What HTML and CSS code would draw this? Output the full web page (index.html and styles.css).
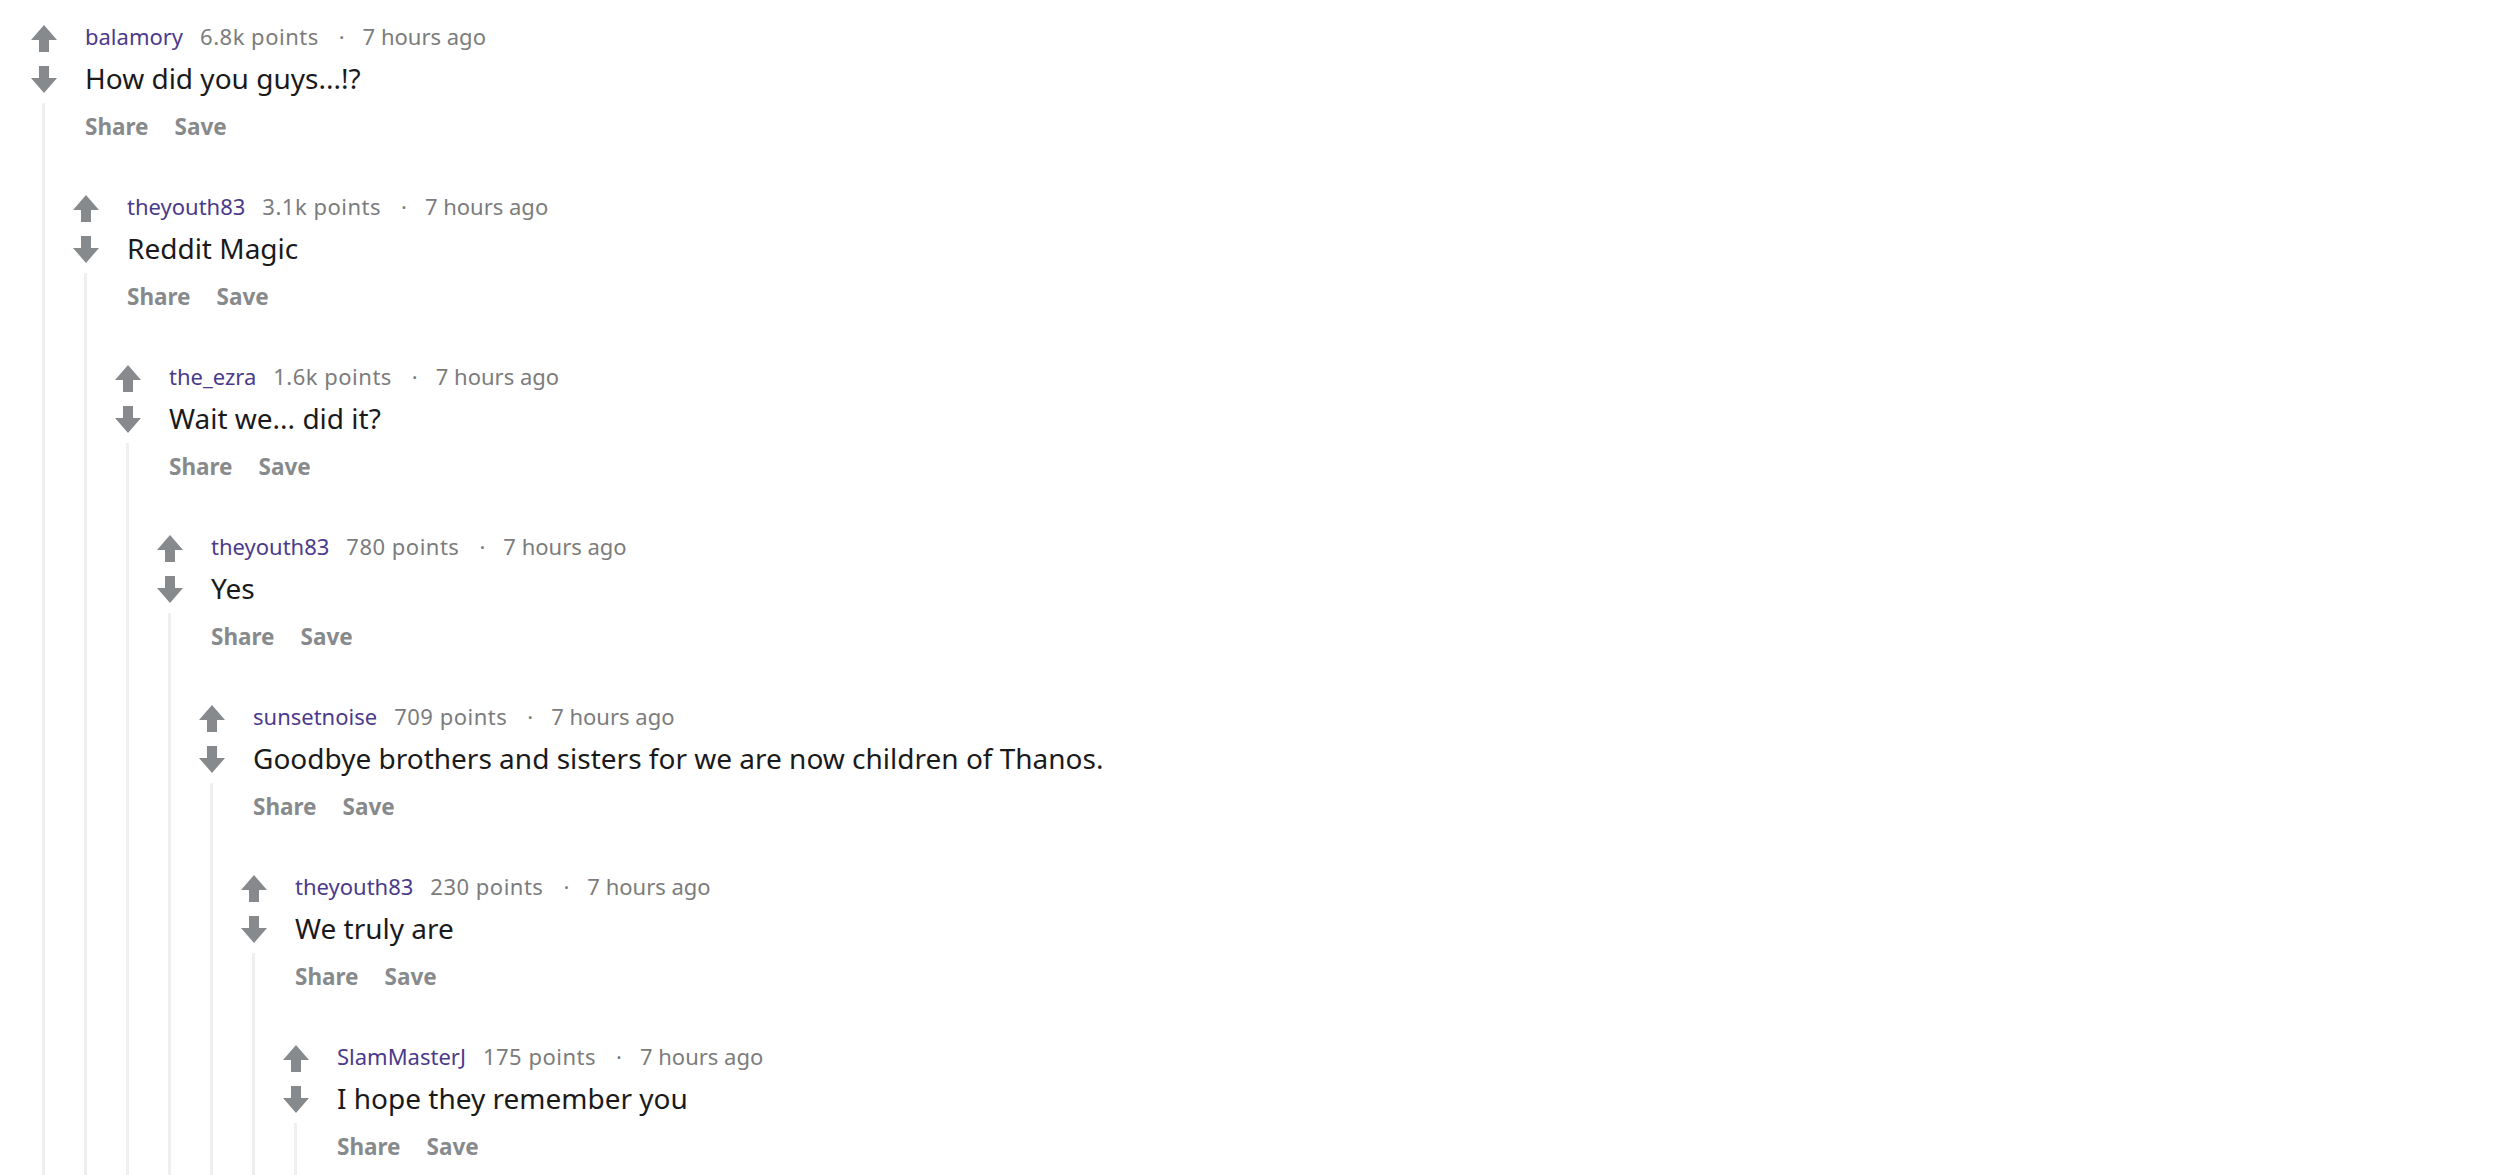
FILE: index.html
```html
<!DOCTYPE html>
<html lang="en">
<head>
<meta charset="utf-8">
<title>Comments</title>
<link rel="stylesheet" href="styles.css">
</head>
<body>
<svg class="defs" width="0" height="0" aria-hidden="true">
  <symbol id="up" viewBox="0 0 26 27"><path d="M13 0 L26 15 L18 15 L18 27 L8 27 L8 15 L0 15 Z"/></symbol>
  <symbol id="down" viewBox="0 0 26 27"><path d="M8 0 L18 0 L18 12 L26 12 L13 27 L0 12 L8 12 Z"/></symbol>
</svg>
<main class="thread-list">
  <div class="comment">
    <div class="votes"><svg class="arrow"><use href="#up"/></svg><svg class="arrow"><use href="#down"/></svg></div>
    <div class="meta"><span class="author">balamory</span><span class="points">6.8k points</span><span class="dot">·</span><span class="time">7 hours ago</span></div>
    <div class="body">How did you guys...!?</div>
    <div class="actions"><span>Share</span><span>Save</span></div>
    <div class="rail"></div>
    <div class="children">
      <div class="comment">
        <div class="votes"><svg class="arrow"><use href="#up"/></svg><svg class="arrow"><use href="#down"/></svg></div>
        <div class="meta"><span class="author">theyouth83</span><span class="points">3.1k points</span><span class="dot">·</span><span class="time">7 hours ago</span></div>
        <div class="body">Reddit Magic</div>
        <div class="actions"><span>Share</span><span>Save</span></div>
        <div class="rail"></div>
        <div class="children">
          <div class="comment">
            <div class="votes"><svg class="arrow"><use href="#up"/></svg><svg class="arrow"><use href="#down"/></svg></div>
            <div class="meta"><span class="author">the_ezra</span><span class="points">1.6k points</span><span class="dot">·</span><span class="time">7 hours ago</span></div>
            <div class="body">Wait we... did it?</div>
            <div class="actions"><span>Share</span><span>Save</span></div>
            <div class="rail"></div>
            <div class="children">
              <div class="comment">
                <div class="votes"><svg class="arrow"><use href="#up"/></svg><svg class="arrow"><use href="#down"/></svg></div>
                <div class="meta"><span class="author">theyouth83</span><span class="points">780 points</span><span class="dot">·</span><span class="time">7 hours ago</span></div>
                <div class="body">Yes</div>
                <div class="actions"><span>Share</span><span>Save</span></div>
                <div class="rail"></div>
                <div class="children">
                  <div class="comment">
                    <div class="votes"><svg class="arrow"><use href="#up"/></svg><svg class="arrow"><use href="#down"/></svg></div>
                    <div class="meta"><span class="author">sunsetnoise</span><span class="points">709 points</span><span class="dot">·</span><span class="time">7 hours ago</span></div>
                    <div class="body">Goodbye brothers and sisters for we are now children of Thanos.</div>
                    <div class="actions"><span>Share</span><span>Save</span></div>
                    <div class="rail"></div>
                    <div class="children">
                      <div class="comment">
                        <div class="votes"><svg class="arrow"><use href="#up"/></svg><svg class="arrow"><use href="#down"/></svg></div>
                        <div class="meta"><span class="author">theyouth83</span><span class="points">230 points</span><span class="dot">·</span><span class="time">7 hours ago</span></div>
                        <div class="body">We truly are</div>
                        <div class="actions"><span>Share</span><span>Save</span></div>
                        <div class="rail"></div>
                        <div class="children">
                          <div class="comment">
                            <div class="votes"><svg class="arrow"><use href="#up"/></svg><svg class="arrow"><use href="#down"/></svg></div>
                            <div class="meta"><span class="author">SlamMasterJ</span><span class="points">175 points</span><span class="dot">·</span><span class="time">7 hours ago</span></div>
                            <div class="body">I hope they remember you</div>
                            <div class="actions"><span>Share</span><span>Save</span></div>
                            <div class="rail"></div>
                            <div class="children more"></div>
                          </div>
                        </div>
                      </div>
                    </div>
                  </div>
                </div>
              </div>
            </div>
          </div>
        </div>
      </div>
    </div>
  </div>
</main>
</body>
</html>
```

FILE: styles.css
```css
html, body {
  margin: 0;
  padding: 0;
  background: #ffffff;
  overflow: hidden;
}

body {
  font-family: "Noto Sans", "Open Sans", sans-serif;
  color: #1a1a1b;
}

.defs {
  position: absolute;
  width: 0;
  height: 0;
}

.thread-list {
  padding-top: 21px;
}

.comment {
  display: grid;
  grid-template-columns: 85px 1fr;
  grid-template-rows: auto auto auto auto;
}

.votes {
  grid-column: 1;
  grid-row: 1 / 3;
  display: flex;
  flex-direction: column;
  gap: 14px;
  padding-top: 4px;
  padding-left: 31px;
}

.arrow {
  display: block;
  width: 26px;
  height: 27px;
  fill: #878a8c;
}

.meta {
  grid-column: 2;
  grid-row: 1;
  font-size: 22px;
  line-height: 30px;
  color: #7c7c7c;
  white-space: nowrap;
}

.author {
  color: #4b3a8c;
}

.points {
  margin-left: 17px;
  letter-spacing: 0.5px;
}

.dot {
  margin: 0 18px 0 20px;
}

.body {
  grid-column: 2;
  grid-row: 2;
  margin-top: 8px;
  font-size: 28px;
  line-height: 38px;
  color: #1a1a1b;
  white-space: nowrap;
}

.actions {
  grid-column: 2;
  grid-row: 3;
  margin-top: 15px;
  font-size: 22.5px;
  line-height: 30px;
  font-weight: 700;
  color: #878a8c;
  display: flex;
  gap: 26px;
}

.rail {
  grid-column: 1;
  grid-row: 3 / 5;
  margin-top: 6px;
  margin-left: 42px;
  width: 3px;
  background: #edeff1;
}

.children {
  grid-column: 1 / 3;
  grid-row: 4;
  margin-left: 42px;
  margin-top: 49px;
}

.children.more {
  height: 120px;
}
```
